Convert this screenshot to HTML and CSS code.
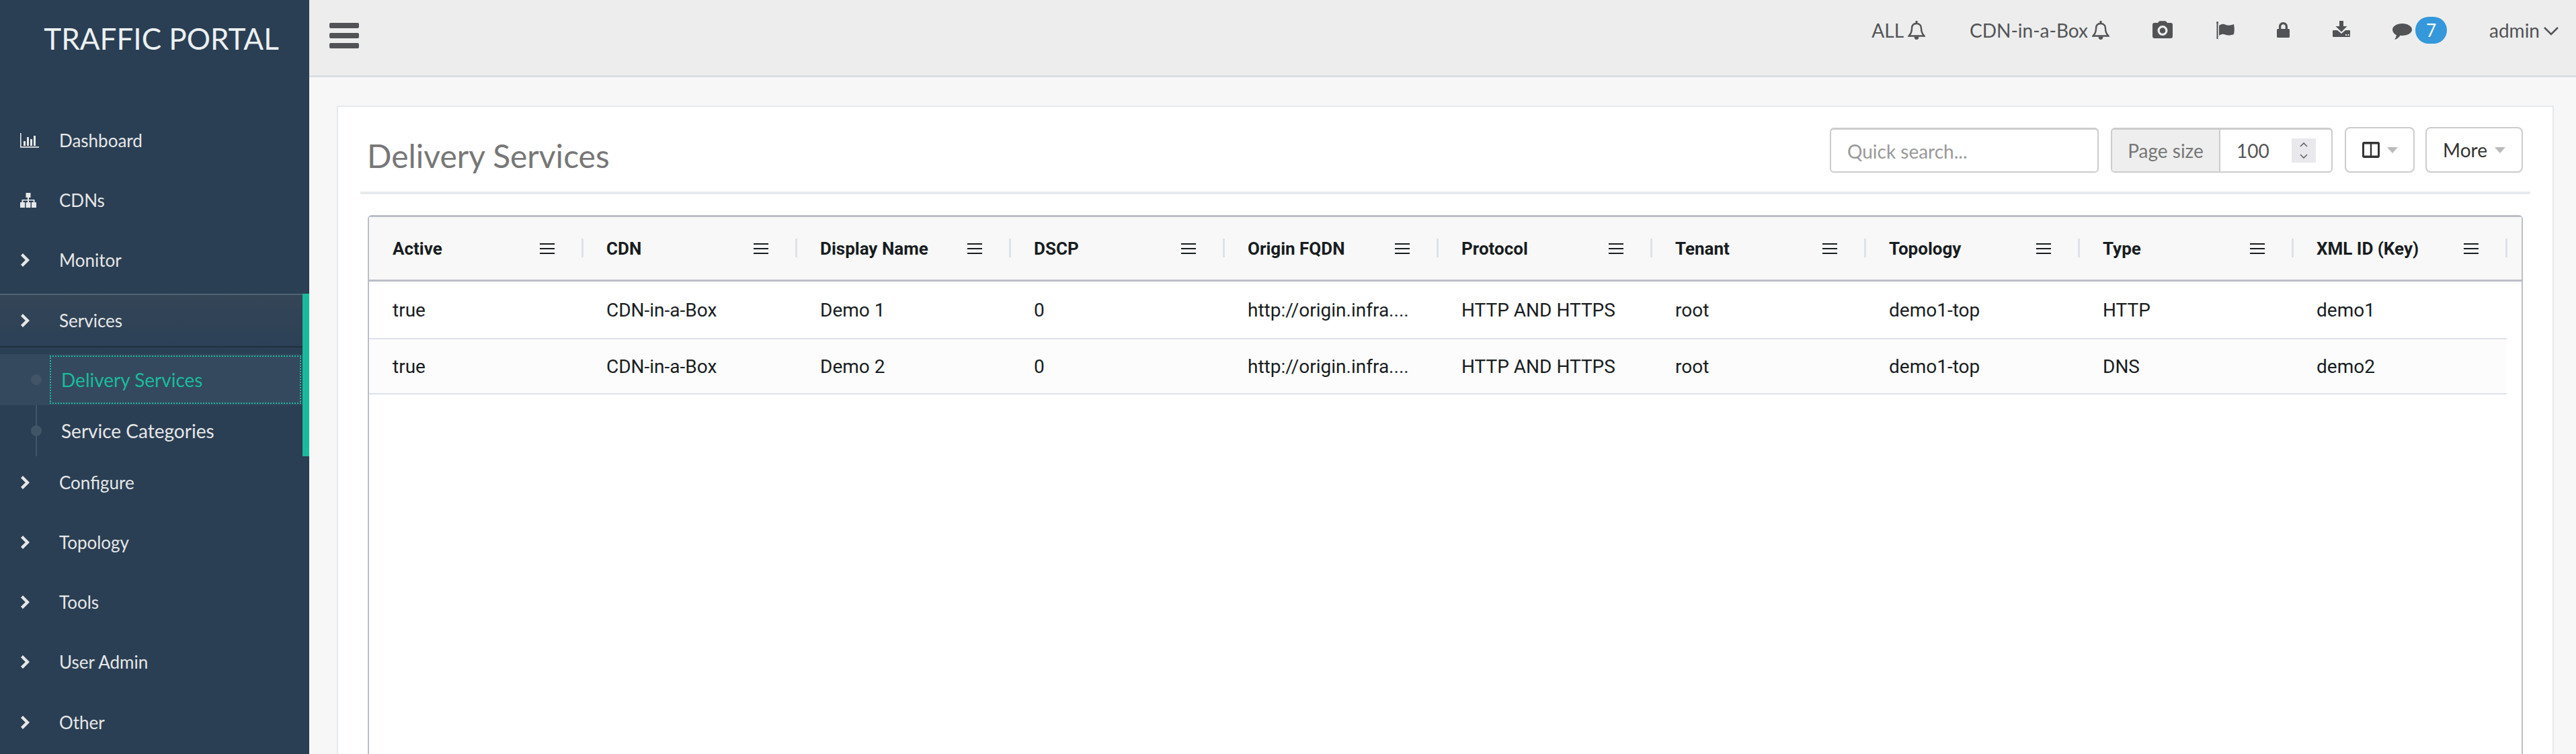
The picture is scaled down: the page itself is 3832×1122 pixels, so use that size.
FILE: index.html
```html
<!DOCTYPE html>
<html lang="en">
<head>
<meta charset="utf-8">
<title>Delivery Services</title>
<link rel="stylesheet" href="styles.css">
</head>
<body>
<svg class="sprite" aria-hidden="true">
  <symbol id="chev" viewBox="0 0 28 22" preserveAspectRatio="xMinYMid meet"><path d="M1 4.200 4 1l10 10L4 21l-3-3.200L7.800 11z"/></symbol>
  <symbol id="bell" viewBox="0 0 26 28"><path fill="none" stroke="currentColor" stroke-width="2.400" d="M13 4C8 4 6 7.400 6 11.500c0 5-1.500 8-4.500 11h23c-3-3-4.500-6-4.500-11C20 7.400 18 4 13 4z"/><path fill="currentColor" d="M11.500 0h3v4h-3zM9.500 23.500h7c0 6-7 6-7 0z"/></symbol>
  <symbol id="menu" viewBox="0 0 22 16"><path d="M0 0h22v2H0zM0 7h22v2H0zM0 14h22v2H0z"/></symbol>
</svg>
<div class="app">
  <aside class="sidebar">
    <div class="brand">TRAFFIC PORTAL</div>
    <nav class="nav">
      <a class="item"><svg class="ico" viewBox="0 0 28 22" width="28" height="22"><path d="M0 0h1.600v20H28v1.800H0zM5 12h3v7H5zM10 6h3v13h-3zM15 9h3v10h-3zM20 4h3v15h-3z"/></svg><span>Dashboard</span></a>
      <a class="item"><svg class="ico" viewBox="0 0 28 22" width="28" height="22" preserveAspectRatio="xMinYMid meet"><path d="M8.500 0h7v7h-2.500v3h8.500v4H24v8h-7v-8h2.500v-2.500H13V14h2.500v8h-7v-8H11v-2.500H4.500V14H7v8H0v-8h2.500v-4H11V7H8.500z"/></svg><span>CDNs</span></a>
      <a class="item"><svg class="ico"><use href="#chev"/></svg><span>Monitor</span></a>
      <div class="group">
        <a class="item item-open"><svg class="ico"><use href="#chev"/></svg><span>Services</span></a>
        <div class="sub">
          <a class="subitem current"><span class="sublabel">Delivery Services</span></a>
          <a class="subitem"><span class="sublabel">Service Categories</span></a>
        </div>
      </div>
      <a class="item"><svg class="ico"><use href="#chev"/></svg><span>Configure</span></a>
      <a class="item"><svg class="ico"><use href="#chev"/></svg><span>Topology</span></a>
      <a class="item"><svg class="ico"><use href="#chev"/></svg><span>Tools</span></a>
      <a class="item"><svg class="ico"><use href="#chev"/></svg><span>User Admin</span></a>
      <a class="item"><svg class="ico"><use href="#chev"/></svg><span>Other</span></a>
    </nav>
  </aside>
  <div class="main">
    <header class="topbar">
      <svg class="burger" viewBox="0 0 44 38" width="44" height="38"><rect y="0" width="44" height="8" rx="2"/><rect y="15" width="44" height="8" rx="2"/><rect y="30" width="44" height="8" rx="2"/></svg>
      <div class="tools">
        <span class="tool t-all">ALL<svg class="bell"><use href="#bell"/></svg></span>
        <span class="tool t-cdn">CDN-in-a-Box<svg class="bell"><use href="#bell"/></svg></span>
        <svg class="tool-ico t-cam" viewBox="0 0 30 26" width="30" height="26"><path fill-rule="evenodd" d="M10 0.500c.5-.3 9.500-.3 10 0L22 3h5a3 3 0 0 1 3 3v17a3 3 0 0 1-3 3H3a3 3 0 0 1-3-3V6a3 3 0 0 1 3-3h5zM15 7a7.500 7.500 0 1 0 0 15 7.500 7.500 0 0 0 0-15zm0 3.200a4.300 4.300 0 1 1 0 8.600 4.300 4.300 0 0 1 0-8.600z"/></svg>
        <svg class="tool-ico t-flag" viewBox="0 0 27 26" width="27" height="26"><circle cx="1.500" cy="1.500" r="1.500"/><path d="M.5 2h2v24h-2zM4 6c3-2.500 6-3 9-1.500 4 1.800 8 1.500 13-.5 1 6 1 10 0 15-5 1.800-9 2-13 .5-3-1.500-6-1-9 1.500z"/></svg>
        <svg class="tool-ico t-lock" viewBox="0 0 19 23" width="19" height="23"><path fill-rule="evenodd" d="M9.500 0C5.500 0 3 3 3 6.500V10H1.500A1.500 1.500 0 0 0 0 11.500v10A1.500 1.500 0 0 0 1.500 23h16a1.500 1.500 0 0 0 1.500-1.500v-10a1.500 1.500 0 0 0-1.500-1.500H16V6.500C16 3 13.500 0 9.500 0zm0 3.200c2 0 3.200 1.500 3.200 3.500V10H6.300V6.700c0-2 1.200-3.500 3.200-3.500z"/></svg>
        <svg class="tool-ico t-down" viewBox="0 0 26 24" width="26" height="24"><path fill-rule="evenodd" d="M10 0h6v8h5.500L13 16.500 4.500 8H10zM1 14h6l6 5 6-5h6a1 1 0 0 1 1 1v8a1 1 0 0 1-1 1H1a1 1 0 0 1-1-1v-8a1 1 0 0 1 1-1zm18 6v2h2v-2zm3.500 0v2h2v-2z"/></svg>
        <span class="t-msg">
          <svg class="tool-ico t-chat" viewBox="0 0 29 24" width="29" height="24"><path d="M14.500 0C22.500 0 29 4 29 9s-6.500 9-14.500 9c-1 0-2 0-3-.2C9.500 21 6.500 23.500 3 24c1.200-1.500 2.500-3.500 2.800-6.800C2.300 15.500 0 12.500 0 9 0 4 6.500 0 14.500 0z"/></svg>
          <span class="badge">7</span>
        </span>
        <span class="tool t-admin">admin<svg class="caret" viewBox="0 0 24 14" width="24" height="14"><path fill="none" stroke="currentColor" stroke-width="2.500" d="M2 2l10 10L22 2"/></svg></span>
      </div>
    </header>
    <main class="content">
      <section class="card">
        <div class="card-head">
          <h1 class="title">Delivery Services</h1>
          <div class="toolbar">
            <div class="search">Quick search...</div>
            <div class="pagesize">
              <span class="ps-label">Page size</span>
              <span class="ps-value">100<span class="spin"><svg viewBox="0 0 16 36" width="16" height="36"><path fill="none" stroke="#666" stroke-width="1.600" d="M3 12l5-5 5 5M3 24l5 5 5-5"/></svg></span></span>
            </div>
            <button class="btn btn-cols"><svg viewBox="0 0 26 24" width="26" height="24"><path fill="#333" fill-rule="evenodd" d="M3 0h20a3 3 0 0 1 3 3v18a3 3 0 0 1-3 3H3a3 3 0 0 1-3-3V3a3 3 0 0 1 3-3zm0 3.500v17h8.800v-17zm11.200 0v17H23v-17z"/></svg><i class="tri"></i></button>
            <button class="btn btn-more">More<i class="tri"></i></button>
          </div>
        </div>
        <div class="grid">
          <div class="row head">
            <div class="th"><b>Active</b><svg class="mn"><use href="#menu"/></svg></div>
            <div class="th"><b>CDN</b><svg class="mn"><use href="#menu"/></svg></div>
            <div class="th"><b>Display Name</b><svg class="mn"><use href="#menu"/></svg></div>
            <div class="th"><b>DSCP</b><svg class="mn"><use href="#menu"/></svg></div>
            <div class="th"><b>Origin FQDN</b><svg class="mn"><use href="#menu"/></svg></div>
            <div class="th"><b>Protocol</b><svg class="mn"><use href="#menu"/></svg></div>
            <div class="th"><b>Tenant</b><svg class="mn"><use href="#menu"/></svg></div>
            <div class="th"><b>Topology</b><svg class="mn"><use href="#menu"/></svg></div>
            <div class="th"><b>Type</b><svg class="mn"><use href="#menu"/></svg></div>
            <div class="th"><b>XML ID (Key)</b><svg class="mn"><use href="#menu"/></svg></div>
          </div>
          <div class="row body r1">
            <div class="td">true</div><div class="td">CDN-in-a-Box</div><div class="td">Demo 1</div><div class="td">0</div><div class="td">http://origin.infra....</div><div class="td">HTTP AND HTTPS</div><div class="td">root</div><div class="td">demo1-top</div><div class="td">HTTP</div><div class="td">demo1</div>
          </div>
          <div class="row body r2">
            <div class="td">true</div><div class="td">CDN-in-a-Box</div><div class="td">Demo 2</div><div class="td">0</div><div class="td">http://origin.infra....</div><div class="td">HTTP AND HTTPS</div><div class="td">root</div><div class="td">demo1-top</div><div class="td">DNS</div><div class="td">demo2</div>
          </div>
        </div>
      </section>
    </main>
  </div>
</div>
</body>
</html>
```
FILE: styles.css
```css
* { box-sizing: border-box; }
html, body { margin: 0; height: 100%; overflow: hidden; }
body { font-family: "Lato", sans-serif; font-size: 28px; background: #f7f7f8; color: #515356; }
.sprite { display: none; }
.app { display: flex; height: 1122px; }

.sidebar { width: 460px; flex: none; background: #2a3f54; color: #ecf0f1; }
.brand { height: 114px; padding: 30px 0 0 20px; text-align: center; font-size: 44px; line-height: 54px; color: #ecf0f1; }
.nav { padding-top: 50px; font-size: 26px; }
.item { display: flex; align-items: center; height: 89.300px; padding-left: 30px; color: #e7e7e7; }
.ico { width: 28px; height: 22px; flex: none; margin-right: 30px; fill: #e7e7e7; }
.group { border-right: 10px solid #1abb9c; height: 242px; margin: 5px 0 -6px; }
.item-open { height: 80px; border-top: 2px solid #4f6377; border-bottom: 2px solid #1f3040; background: linear-gradient(#344556, #2c4157); }
.sub { position: relative; padding-top: 10px; height: 162px; font-size: 28px; }
.sub::before { content: ""; position: absolute; left: 53px; top: 10px; bottom: 0; width: 2px; background: #425567; }
.subitem { display: flex; align-items: center; height: 76px; padding-left: 74px; position: relative; color: #e7e7e7; }
.subitem::before { content: ""; position: absolute; left: 46px; top: 30px; width: 16px; height: 16px; border-radius: 50%; background: #425567; }
.sublabel { display: flex; align-items: center; height: 72px; width: 374px; padding-left: 17px; }
.current { background: #34495e; }
.current .sublabel { color: #1abb9c; outline: 2px dotted #1abb9c; outline-offset: -2px; }

.main { flex: 1; min-width: 0; display: flex; flex-direction: column; }
.topbar { height: 115px; flex: none; background: #ededed; border-bottom: 3px solid #d9dee4; display: flex; align-items: flex-start; padding-left: 30px; }
.burger { margin-top: 34px; fill: #515356; }
.tools { margin-left: auto; display: flex; align-items: center; height: 90px; padding-right: 25px; }
.tool { display: flex; align-items: center; }
.bell { width: 26px; height: 28px; margin-left: 6px; margin-top: -1px; }
.tool-ico { fill: #515356; display: block; }
.t-cdn { margin-left: 66px; }
.t-cam { margin: -2px 0 0 64px; }
.t-flag { margin-left: 65px; }
.t-lock { margin: -2px 0 0 63px; }
.t-down { margin: -4px 0 0 64px; }
.t-msg { margin-left: 63px; display: flex; align-items: center; }
.t-chat { margin-top: 4px; }
.badge { width: 47px; height: 40px; margin-left: 5px; border-radius: 20px; background: #3498db; color: #fff; display: flex; align-items: center; justify-content: center; font-size: 26px; }
.t-admin { margin-left: 63px; }
.caret { margin-left: 5px; margin-top: 2px; }

.content { flex: 1; padding: 42px 33px 0 41px; min-height: 0; overflow: hidden; }
.card { height: 1000px; background: #fff; border: 2px solid #e6e9ed; padding: 0 33px; }
.card-head { display: flex; justify-content: space-between; align-items: flex-start; height: 130px; border-bottom: 4px solid #e6e9ed; }
.title { margin: 0; padding: 43px 0 0 10px; font-size: 48px; line-height: 60px; font-weight: 400; color: #777; }
.toolbar { display: flex; margin-right: 11px; padding-top: 30px; color: #555; }
.search { width: 400px; height: 67px; margin-top: 1px; border: 2px solid #ccc; border-top-width: 3px; border-radius: 6px; padding: 0 24px; line-height: 64px; color: #999; background: #fff; }
.pagesize { margin: 1px 0 0 18px; width: 330px; height: 67px; border: 2px solid #ccc; border-top-width: 3px; border-radius: 6px; display: flex; overflow: hidden; }
.ps-label { width: 161px; background: #eee; border-right: 2px solid #ccc; color: #777; display: flex; align-items: center; justify-content: center; }
.ps-value { flex: 1; display: flex; align-items: center; padding-left: 24px; color: #555; position: relative; }
.spin { position: absolute; right: 23px; top: 13px; width: 36px; height: 36px; background: #e9e9ed; display: flex; justify-content: center; }
.btn { height: 68px; margin: 0 0 0 18px; font: inherit; color: #333; background: #fff; border: 2px solid #ccc; border-radius: 8px; display: flex; align-items: center; justify-content: center; padding: 0; }
.btn-cols { width: 104px; }
.btn-more { width: 145px; margin-left: 16px; }
.tri { display: block; width: 0; height: 0; margin-left: 11px; border: 8px solid transparent; border-top: 9px solid #bbb; border-bottom: 0; }

.grid { margin: 31px 11px 0; height: 900px; border: 2px solid #babfc7; border-top-width: 3px; border-radius: 6px 6px 0 0; font-family: "Roboto", sans-serif; color: #181d1f; }
.row { display: grid; grid-template-columns: repeat(10, 318px); }
.head { height: 96px; background: #f8f8f8; border-bottom: 3px solid #babfc7; }
.th { display: flex; align-items: center; justify-content: space-between; padding: 0 42px 0 35px; position: relative; height: 93px; }
.th b { font-weight: 700; font-size: 26px; }
.th::after { content: ""; position: absolute; right: -1px; top: 32px; width: 3px; height: 28px; background: #dde2eb; }
.mn { width: 22px; height: 16px; fill: #181d1f; }
.body { width: 3180px; border-bottom: 2px solid #dde2eb; }
.r1 { height: 86px; }
.r2 { height: 82px; background: #fcfcfc; }
.td { display: flex; align-items: center; padding-left: 35px; font-size: 28px; }
```
